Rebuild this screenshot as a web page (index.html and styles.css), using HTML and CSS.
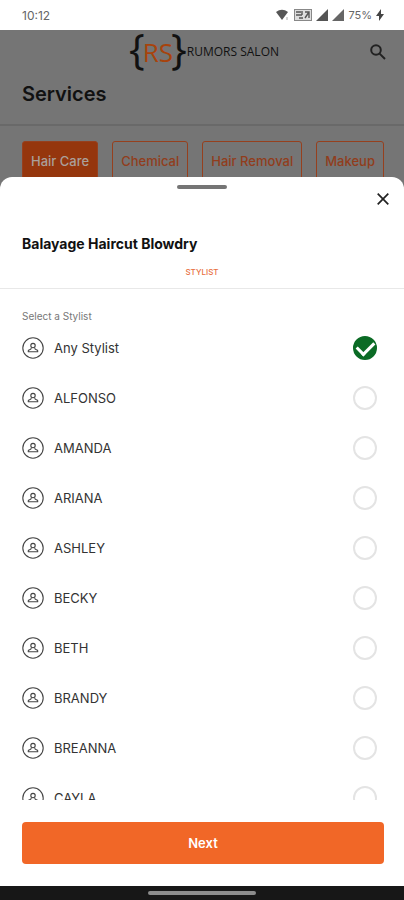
FILE: index.html
```html
<!DOCTYPE html>
<html lang="en">
<head>
<meta charset="utf-8">
<meta name="viewport" content="width=device-width, initial-scale=1">
<title>Rumors Salon</title>
<link rel="stylesheet" href="styles.css">
</head>
<body>
<svg class="defs" aria-hidden="true">
  <symbol id="person" viewBox="0 0 22 22">
    <g fill="none" stroke="currentColor">
      <circle cx="11" cy="11" r="10.2" stroke-width="1.1"/>
      <circle cx="11" cy="8.6" r="2.2" stroke-width="1.1"/>
      <path d="M9.4 10.6 8.8 12.2 6.6 13.2Q6 13.8 6.3 14.8H15.7Q16 13.8 15.4 13.2L13.2 12.2 12.6 10.6" stroke-width="1.1"/>
    </g>
  </symbol>
</svg>
<div class="status">
  <span>10:12</span>
  <span class="status-icons">
    <svg width="14" height="12" viewBox="0 0 14 12"><path d="M0 3Q6 -1.5 12 3L6 11Z" fill="#555"/><path d="M11 8v3" stroke="#aaa"/></svg>
    <svg width="18" height="12" viewBox="0 0 18 12"><rect x=".5" y=".5" width="17" height="11" fill="#ddd" stroke="#888"/><path d="M2 3h5M2 6h6M5 9h4M8 2v4M11 3h4v6M11 9l4-6" stroke="#555" fill="none" stroke-width="1.4"/></svg>
    <svg width="12" height="12" viewBox="0 0 12 12"><path d="M12 0v12H0Z" fill="#555"/></svg>
    <svg width="12" height="12" viewBox="0 0 12 12"><path d="M12 0v12H0Z" fill="#666"/></svg>
    <span>75%</span>
    <svg width="8" height="12" viewBox="0 0 8 12"><path d="M5 0 0 7h3v5l5-7H5Z" fill="#444"/></svg>
  </span>
</div>
<div class="app">
  <header class="top">
    <div class="logo"><span class="brace">{</span><span class="initials">RS</span><span class="brace">}</span><span class="brand">RUMORS SALON</span></div>
    <button class="search" aria-label="Search"><svg width="16" height="16" viewBox="0 0 16 16" fill="none" stroke="#222" stroke-width="2"><circle cx="6" cy="6" r="4.8"/><path d="m9.6 9.6 5.4 5.4"/></svg></button>
  </header>
  <h1>Services</h1>
  <nav class="tabs">
    <button class="tab tab-active">Hair Care</button>
    <button class="tab">Chemical</button>
    <button class="tab">Hair Removal</button>
    <button class="tab">Makeup</button>
  </nav>
</div>
<main class="sheet">
  <div class="grabber"></div>
  <button class="close" aria-label="Close"><svg width="12" height="12" viewBox="0 0 12 12" stroke="#222" stroke-width="1.7"><path d="m.7.7 10.6 10.6M11.3.7.7 11.3"/></svg></button>
  <h2>Balayage Haircut Blowdry</h2>
  <div class="step">STYLIST</div>
  <fieldset class="list">
    <legend>Select a Stylist</legend>
    <label class="row"><svg class="avatar"><use href="#person"/></svg><span>Any Stylist</span><input type="radio" name="stylist" checked></label>
    <label class="row"><svg class="avatar"><use href="#person"/></svg><span>ALFONSO</span><input type="radio" name="stylist"></label>
    <label class="row"><svg class="avatar"><use href="#person"/></svg><span>AMANDA</span><input type="radio" name="stylist"></label>
    <label class="row"><svg class="avatar"><use href="#person"/></svg><span>ARIANA</span><input type="radio" name="stylist"></label>
    <label class="row"><svg class="avatar"><use href="#person"/></svg><span>ASHLEY</span><input type="radio" name="stylist"></label>
    <label class="row"><svg class="avatar"><use href="#person"/></svg><span>BECKY</span><input type="radio" name="stylist"></label>
    <label class="row"><svg class="avatar"><use href="#person"/></svg><span>BETH</span><input type="radio" name="stylist"></label>
    <label class="row"><svg class="avatar"><use href="#person"/></svg><span>BRANDY</span><input type="radio" name="stylist"></label>
    <label class="row"><svg class="avatar"><use href="#person"/></svg><span>BREANNA</span><input type="radio" name="stylist"></label>
    <label class="row"><svg class="avatar"><use href="#person"/></svg><span>CAYLA</span><input type="radio" name="stylist"></label>
  </fieldset>
  <div class="footer"><button class="next">Next</button></div>
</main>
<div class="system-bar"><div class="handle"></div></div>
</body>
</html>
```
FILE: styles.css
```css
* { box-sizing: border-box; }
body {
  margin: 0;
  height: 100vh;
  display: flex;
  flex-direction: column;
  overflow: hidden;
  background: #fff;
  color: #222;
  font-family: Inter, Roboto, sans-serif;
  font-size: 13px;
}
button { font: inherit; border: 0; background: none; padding: 0; }
h1, h2 { margin: 0; font-weight: 600; color: #111; }
svg { display: block; flex: none; }
.defs { position: absolute; width: 0; height: 0; }

.status {
  flex: none;
  height: 30px;
  padding: 0 20px 0 22px;
  display: flex;
  align-items: center;
  justify-content: space-between;
  color: #666;
  font-size: 12px;
}
.status-icons { display: flex; align-items: center; gap: 4px; font-size: 11px; }

.app { flex: none; background: #757575; }
.top {
  height: 44px;
  padding: 0 18px 0 129px;
  display: flex;
  align-items: center;
  justify-content: space-between;
}
.logo { display: flex; align-items: center; color: #111; white-space: nowrap; line-height: 40px; font-family: "Open Sans", sans-serif; }
.brace { font-size: 42px; margin: 0 -2px 8px 0; }
.initials { font-size: 26px; margin-right: -2px; color: #a8430c; }
.brand { font-size: 12px; margin-left: 2px; }
.app h1 { padding: 4px 22px 0; font-size: 20px; line-height: 32px; height: 50px; }
.tabs {
  display: flex;
  gap: 14px;
  padding: 15px 20px 9px 22px;
  border-top: 2px solid #696969;
}
.tab {
  height: 40px;
  padding: 0 8px;
  border: 1px solid #96401e;
  border-radius: 3px;
  color: #913d1c;
  font-weight: 500;
  white-space: nowrap;
}
.tab-active { background: #95360d; color: #aaa09b; }

.sheet {
  flex: 1;
  min-height: 0;
  margin-top: -13px;
  display: flex;
  flex-direction: column;
  background: #fff;
  border-radius: 12px 12px 0 0;
}
.grabber { flex: none; width: 50px; height: 4px; margin: 8px auto 0; border-radius: 2px; background: #757575; }
.close { align-self: flex-end; margin: 4px 15px 0 0; }
.sheet h2 { margin-top: 28px; padding: 0 22px; font-size: 14px; font-weight: 700; line-height: 22px; }
.step {
  padding: 11px 0 10px;
  border-bottom: 1px solid #e8e8e8;
  text-align: center;
  color: #e8703f;
  font-size: 8px;
  font-weight: 500;
  line-height: 12px;
}
.list { flex: 1; min-height: 0; margin: 0; padding: 0 27px 0 22px; border: 0; overflow: hidden; }
legend { padding: 20px 0 0; font-size: 10px; line-height: 14px; color: #777; }
.row { display: flex; align-items: center; gap: 10px; height: 50px; }
.row span { flex: 1; color: #333; }
.avatar { width: 22px; height: 22px; color: #444; }
.row input {
  appearance: none;
  width: 24px;
  height: 24px;
  margin: 0;
  border: 2px solid #e4e4e4;
  border-radius: 50%;
  display: grid;
  place-items: center;
}
.row input:checked { background: #0b6b25; border-color: #0b6b25; }
.row input:checked::before {
  content: "";
  width: 14px;
  height: 8px;
  margin-bottom: 4px;
  border: solid #fff;
  border-width: 0 0 3px 3px;
  rotate: -45deg;
}
.footer { flex: none; padding: 22px 20px 22px 22px; }
.next {
  display: block;
  width: 100%;
  height: 42px;
  border-radius: 4px;
  background: #f16727;
  color: #fff;
  font-weight: 600;
}
.system-bar { flex: none; height: 14px; padding-top: 5px; background: #171717; }
.handle { width: 108px; height: 4px; margin: 0 auto; border-radius: 2px; background: #8c8c8c; }
```
